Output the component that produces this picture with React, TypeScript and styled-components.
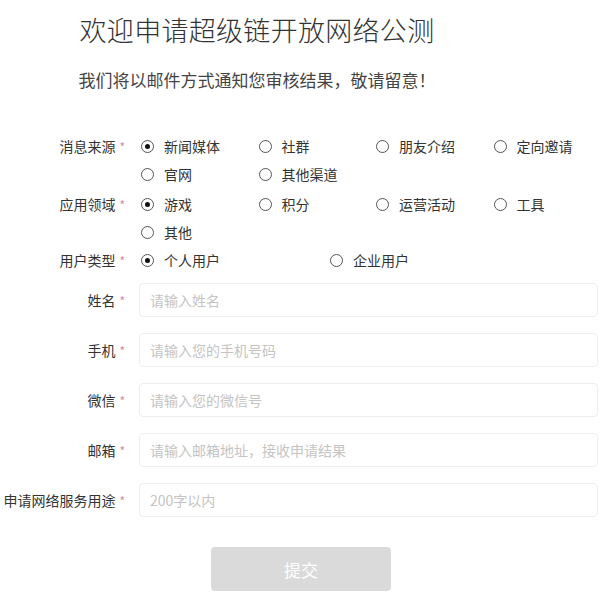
import React from "react";
import styled, { createGlobalStyle } from "styled-components";

const Global = createGlobalStyle`
  html, body { margin: 0; padding: 0; background: #fff; }
  body { font-family: "Noto Sans CJK SC", "Noto Sans", sans-serif; color: #333; }
  * { box-sizing: border-box; }
`;

const Page = styled.div`
  width: 609px;
  padding: 12px 11px 0 0;
`;

const Header = styled.header`
  width: 514px;
  text-align: center;
`;

const Title = styled.h1`
  margin: 0;
  font-size: 27px;
  font-weight: 300;
  line-height: 36px;
  color: #333;
  letter-spacing: 0.3px;
`;

const Subtitle = styled.p`
  margin: 20px 0 0 0;
  font-size: 17px;
  line-height: 24px;
  color: #444;
`;

const Form = styled.form`
  margin-top: 40px;
  display: flex;
  flex-direction: column;
`;

const Row = styled.div<{ $gap?: number }>`
  display: grid;
  grid-template-columns: 125px 1fr;
  column-gap: 14px;
  margin-bottom: ${(p) => p.$gap ?? 0}px;
`;

const Label = styled.div<{ $h: number }>`
  height: ${(p) => p.$h}px;
  display: flex;
  align-items: center;
  justify-content: flex-end;
  font-size: 14px;
  color: #333;
  white-space: nowrap;
`;

const Star = styled.span`
  color: #d48a96;
  font-size: 12px;
  margin-left: 4px;
`;

const Options = styled.div<{ $col: number; $n: number }>`
  display: grid;
  grid-template-columns: repeat(${(p) => p.$n}, ${(p) => p.$col}px);
  grid-auto-rows: 28px;
  padding-left: 2px;
`;

const Option = styled.label`
  display: flex;
  align-items: center;
  gap: 10px;
  font-size: 14px;
  color: #333;
  white-space: nowrap;
`;

const Circle = styled.span<{ $on?: boolean }>`
  width: 13px;
  height: 13px;
  border-radius: 50%;
  border: 1px solid #555;
  display: flex;
  align-items: center;
  justify-content: center;
  flex: none;
  &::after {
    content: "";
    width: 5px;
    height: 5px;
    border-radius: 50%;
    background: ${(p) => (p.$on ? "#111" : "transparent")};
  }
`;

const Input = styled.input`
  height: 34px;
  width: 100%;
  border: 1px solid #eeeeee;
  border-radius: 4px;
  padding: 0 10px;
  font-family: inherit;
  font-size: 14px;
  color: #333;
  outline: none;
  &::placeholder { color: #c4c4c4; }
`;

const ButtonWrap = styled.div`
  padding-left: 211px;
  margin-top: 30px;
`;

const Submit = styled.button`
  width: 180px;
  height: 44px;
  border: none;
  border-radius: 4px;
  background: #dadada;
  color: #fff;
  font-family: inherit;
  font-size: 17px;
`;

type Group = { label: string; col: number; n: number; items: string[]; gap: number };

const groups: Group[] = [
  { label: "消息来源", col: 117.5, n: 4, items: ["新闻媒体", "社群", "朋友介绍", "定向邀请", "官网", "其他渠道"], gap: 2 },
  { label: "应用领域", col: 117.5, n: 4, items: ["游戏", "积分", "运营活动", "工具", "其他"], gap: 0 },
  { label: "用户类型", col: 189, n: 2, items: ["个人用户", "企业用户"], gap: 9 },
];

const fields = [
  { label: "姓名", ph: "请输入姓名" },
  { label: "手机", ph: "请输入您的手机号码" },
  { label: "微信", ph: "请输入您的微信号" },
  { label: "邮箱", ph: "请输入邮箱地址，接收申请结果" },
  { label: "申请网络服务用途", ph: "200字以内" },
];

export default function App() {
  return (
    <Page>
      <Global />
      <Header>
        <Title>欢迎申请超级链开放网络公测</Title>
        <Subtitle>我们将以邮件方式通知您审核结果，敬请留意！</Subtitle>
      </Header>
      <Form onSubmit={(e) => e.preventDefault()}>
        {groups.map((g) => (
          <Row key={g.label} $gap={g.gap}>
            <Label $h={28}>
              {g.label}
              <Star>*</Star>
            </Label>
            <Options $col={g.col} $n={g.n}>
              {g.items.map((it, i) => (
                <Option key={it}>
                  <Circle $on={i === 0} />
                  {it}
                </Option>
              ))}
            </Options>
          </Row>
        ))}
        {fields.map((f, i) => (
          <Row key={f.label} $gap={i < fields.length - 1 ? 16 : 0}>
            <Label $h={34}>
              {f.label}
              <Star>*</Star>
            </Label>
            <Input placeholder={f.ph} />
          </Row>
        ))}
        <ButtonWrap>
          <Submit type="submit">提交</Submit>
        </ButtonWrap>
      </Form>
    </Page>
  );
}
